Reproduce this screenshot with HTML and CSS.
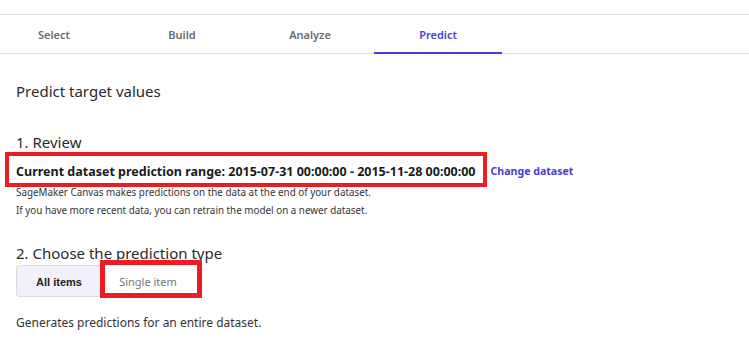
FILE: index.html
```html
<!DOCTYPE html>
<html>
<head>
<meta charset="utf-8">
<link rel="stylesheet" href="styles.css">
</head>
<body>
<div class="page">
  <nav class="tabs">
    <div class="tab">Select</div>
    <div class="tab">Build</div>
    <div class="tab">Analyze</div>
    <div class="tab active">Predict</div>
  </nav>
  <main class="content">
    <h1 class="title">Predict target values</h1>
    <h2 class="section">1. Review</h2>
    <div class="range-row">
      <div class="mark range-box"><span class="range">Current dataset prediction range: 2015-07-31 00:00:00 - 2015-11-28 00:00:00</span></div>
      <a class="link">Change dataset</a>
    </div>
    <p class="note">SageMaker Canvas makes predictions on the data at the end of your dataset.<br>If you have more recent data, you can retrain the model on a newer dataset.</p>
    <h2 class="section section2">2. Choose the prediction type</h2>
    <div class="segments">
      <div class="seg seg-on">All items</div>
      <div class="seg-mark"><div class="seg seg-off">Single item</div></div>
    </div>
    <p class="desc">Generates predictions for an entire dataset.</p>
  </main>
</div>
</body>
</html>
```
FILE: styles.css
```css
* { box-sizing: border-box; }
html, body { margin: 0; padding: 0; background: #fff; }
body { font-family: "Noto Sans", "Open Sans", sans-serif; color: #222; width: 749px; height: 354px; overflow: hidden; }
.page { padding-top: 14px; }
.tabs {
  display: flex;
  border-top: 1px solid #e1e1e1;
  border-bottom: 1px solid #e1e1e1;
  height: 40px;
}
.tabs .tab:first-child { width: 118px; padding-right: 10px; }
.tab {
  width: 128px;
  height: 39px;
  display: flex;
  align-items: center;
  justify-content: center;
  font-size: 11px;
  font-weight: 600;
  color: #6b6b6b;
}
.tab.active { color: #4b3bd6; border-bottom: 2px solid #4b3bd6; padding-top: 2px; }
.content { padding: 0 16px; }
.title { font-size: 15px; font-weight: 400; margin: 27px 0 0; line-height: 20px; color: #2a2a2a; }
.section { font-size: 15px; font-weight: 400; margin: 31px 0 0; line-height: 20px; color: #2a2a2a; }
.range-row { display: flex; align-items: center; margin-left: -11px; }
.range-box { border: 4px solid #ec1c24; padding: 3px 7px 2px; }
.range { font-size: 12.5px; font-weight: 700; color: #1a1a1a; white-space: nowrap; }
.link { font-size: 10.6px; font-weight: 700; color: #4b3bd6; margin-left: 4px; padding-top: 2px; }
.note { font-size: 9.85px; line-height: 18px; margin: -4px 0 0; color: #333; }
.section2 { margin-top: 24px; }
.segments { display: flex; margin-top: -3px; }
.seg { height: 33px; display: flex; align-items: center; justify-content: center; font-size: 11px; }
.seg-on { width: 85px; height: 32px; padding-top: 2px; background: #f2f0fa; border: 1px solid #dcdcdc; border-right: none; border-radius: 4px 0 0 4px; font-family: "Liberation Sans", Arial, sans-serif; font-weight: 700; color: #222; margin-top: 5px; }
.seg-mark { border: 5px solid #ec1c24; width: 102px; height: 38px; display: flex; align-items: center; justify-content: flex-start; margin-left: -1px; }
.seg-off { color: #777; width: 86px; height: 28px; padding-top: 4px; }
.desc { font-size: 12px; margin: 16px 0 0; color: #333; }
```
